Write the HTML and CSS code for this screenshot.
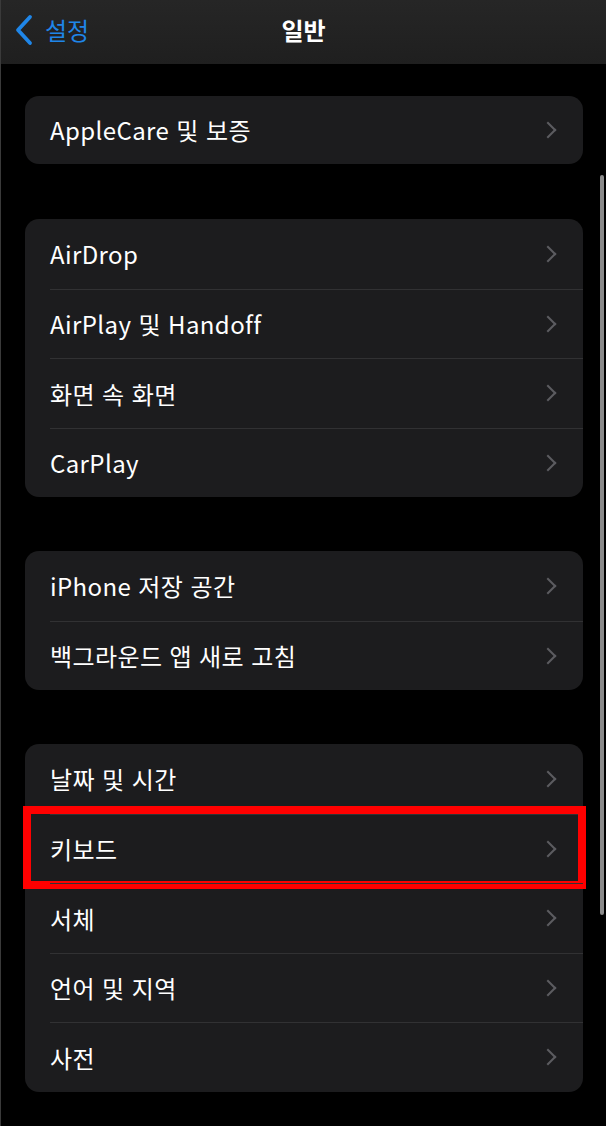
FILE: index.html
```html
<!DOCTYPE html>
<html lang="ko">
<head>
    <meta charset="UTF-8">
    <meta name="viewport" content="width=device-width, initial-scale=1.0">
    <title>일반</title>
    <link rel="stylesheet" href="styles.css">
</head>
<body>

<div class="screen">
    <div class="navbar">
        <a class="back" href="#">
            <svg width="20" height="32" viewBox="0 0 20 32"><path d="M17 3 L5 16 L17 29" fill="none" stroke="#1f86e8" stroke-width="3.8" stroke-linecap="round" stroke-linejoin="round"/></svg>
            <span>설정</span>
        </a>
        <h1 class="title">일반</h1>
    </div>

    <div class="content">
        <ul class="group single">
            <li class="row first">AppleCare 및 보증</li>
        </ul>

        <ul class="group">
            <li class="row first">AirDrop</li>
            <li class="row">AirPlay 및 Handoff</li>
            <li class="row">화면 속 화면</li>
            <li class="row">CarPlay</li>
        </ul>

        <ul class="group">
            <li class="row first">iPhone 저장 공간</li>
            <li class="row">백그라운드 앱 새로 고침</li>
        </ul>

        <ul class="group">
            <li class="row first">날짜 및 시간</li>
            <li class="row highlight">키보드</li>
            <li class="row">서체</li>
            <li class="row">언어 및 지역</li>
            <li class="row">사전</li>
        </ul>
    </div>

    <div class="scrollbar"></div>
</div>

</body>
</html>
```

FILE: styles.css
```css
body {
    margin: 0;
    padding: 0;
    background-color: #000;
    font-family: "Noto Sans CJK KR", "Noto Sans", sans-serif;
    color: #fff;
}

.screen {
    position: relative;
    width: 606px;
    height: 1126px;
    overflow: hidden;
    background-color: #000;
    border-left: 1px solid #3a3a3a;
    box-sizing: border-box;
}

.navbar {
    position: relative;
    height: 64px;
    background: linear-gradient(180deg, #262626 0%, #1f1f1f 100%);
    display: flex;
    align-items: center;
    justify-content: center;
}

.back {
    position: absolute;
    left: 12px;
    top: 14px;
    display: flex;
    align-items: center;
    gap: 12px;
    color: #1f86e8;
    text-decoration: none;
    font-size: 24px;
    line-height: 32px;
}

.title {
    margin: 0;
    font-size: 24px;
    font-weight: 700;
    line-height: 32px;
    margin-bottom: 4px;
}

.content {
    padding: 32px 23px 0 24px;
}

.group {
    list-style: none;
    margin: 0 0 54px 0;
    padding: 0;
    background-color: #1c1c1e;
    border-radius: 14px;
}

.group.single {
    margin-bottom: 55px;
}

.row {
    position: relative;
    height: 69.5px;
    margin-left: 25px;
    padding-right: 27px;
    display: flex;
    align-items: center;
    font-size: 24px;
    letter-spacing: 0.4px;
    border-top: 1px solid #313133;
    box-sizing: border-box;
}

.row.first {
    border-top: none;
    padding-bottom: 1px;
}

.single .row {
    height: 68px;
}

.row::before {
    content: "";
    position: absolute;
    right: 29px;
    top: 50%;
    width: 10px;
    height: 10px;
    margin-top: -6px;
    border-top: 2.5px solid #5c5c60;
    border-right: 2.5px solid #5c5c60;
    transform: rotate(45deg);
}

.highlight::after {
    content: "";
    position: absolute;
    left: -27px;
    right: -3px;
    top: -9px;
    bottom: -6px;
    border: 8px solid #ff0000;
}

.scrollbar {
    position: absolute;
    left: 599px;
    top: 175px;
    width: 4px;
    height: 740px;
    border-radius: 2px;
    background-color: #8a8a8a;
}
```
